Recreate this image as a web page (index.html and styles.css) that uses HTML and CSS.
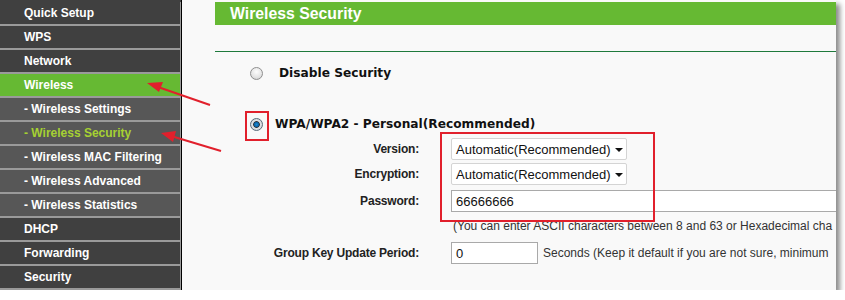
FILE: index.html
```html
<!DOCTYPE html>
<html lang="en">
<head>
    <meta charset="UTF-8">
    <title>Wireless Security</title>
    <link rel="stylesheet" href="styles.css">
</head>
<body>
    <div class="shot">
        <ul class="menu">
            <li class="item">Quick Setup</li>
            <li class="item">WPS</li>
            <li class="item">Network</li>
            <li class="item active">Wireless</li>
            <li class="item sub">- Wireless Settings</li>
            <li class="item sub current">- Wireless Security</li>
            <li class="item sub">- Wireless MAC Filtering</li>
            <li class="item sub">- Wireless Advanced</li>
            <li class="item sub">- Wireless Statistics</li>
            <li class="item">DHCP</li>
            <li class="item">Forwarding</li>
            <li class="item">Security</li>
        </ul>

        <div class="content">
            <div class="title">Wireless Security</div>
            <div class="rule"></div>

            <div class="option opt-disable">
                <span class="radio"></span>
                <span class="option-label">Disable Security</span>
            </div>
            <div class="option opt-wpa">
                <span class="radio checked"></span>
                <span class="option-label">WPA/WPA2 - Personal(Recommended)</span>
            </div>

            <div class="form">
                <div class="row row-version">
                    <label>Version:</label>
                    <div class="select">Automatic(Recommended)<span class="caret"></span></div>
                </div>
                <div class="row row-enc">
                    <label>Encryption:</label>
                    <div class="select">Automatic(Recommended)<span class="caret"></span></div>
                </div>
                <div class="row row-pass">
                    <label>Password:</label>
                    <div class="input wide">66666666</div>
                </div>
                <div class="row row-hint">
                    <label></label>
                    <div class="hint">(You can enter ASCII characters between 8 and 63 or Hexadecimal cha</div>
                </div>
                <div class="row row-group">
                    <label>Group Key Update Period:</label>
                    <div class="input short">0</div>
                    <span class="note">Seconds (Keep it default if you are not sure, minimum</span>
                </div>
            </div>
        </div>

        <!-- annotations drawn over the screenshot -->
        <div class="mark mark-radio"></div>
        <div class="mark mark-fields"></div>
        <svg class="arrows" width="836" height="290" viewBox="0 0 836 290">
            <line x1="210" y1="105" x2="158" y2="87" />
            <polygon points="147,83 163,82 159,92" />
            <line x1="221" y1="151" x2="171" y2="136" />
            <polygon points="161,133 176,131 173,142" />
        </svg>
    </div>
</body>
</html>
```

FILE: styles.css
```css
* {
    margin: 0;
    padding: 0;
    box-sizing: border-box;
}

body {
    background: #fff;
    font-family: "Liberation Sans", Arial, sans-serif;
    font-size: 12px;
    color: #222;
}

.shot {
    position: relative;
    width: 836px;
    height: 290px;
    display: flex;
    overflow: hidden;
    background: #f9f9f9;
    box-shadow: 4px 4px 5px rgba(0, 0, 0, 0.45);
}

/* left menu */
.menu {
    list-style: none;
    width: 182px;
    flex-shrink: 0;
    padding-top: 2px;
    background: #404040;
    border-right: 1px solid #000;
}

.item {
    height: 24px;
    padding-left: 24px;
    display: flex;
    align-items: center;
    background: #404040;
    border-bottom: 2px solid #9a9a9a;
    border-right: 1px solid #9a9a9a;
    color: #fff;
    font-weight: bold;
    font-size: 12px;
}

.item.sub {
    background: #575757;
}

.item.active {
    background: #66b933;
}

.item.current {
    color: #a6d132;
}

/* main area */
.content {
    flex: 1;
    padding-left: 33px;
    padding-top: 2px;
    position: relative;
}

.title {
    height: 23px;
    background: #66b933;
    color: #fff;
    font-weight: bold;
    font-size: 15.8px;
    line-height: 23px;
    padding-left: 15px;
}

.rule {
    height: 1px;
    margin-top: 26px;
    background: #1f7a3c;
}

.option {
    display: flex;
    align-items: center;
    height: 20px;
    padding-left: 35px;
}

.opt-disable {
    margin-top: 11px;
}

.opt-wpa {
    margin-top: 31px;
}

.option-label {
    font-family: "DejaVu Sans", Verdana, sans-serif;
    font-weight: bold;
    font-size: 12.2px;
    color: #111;
    margin-left: 16px;
}

.opt-wpa .option-label {
    margin-left: 12px;
}

.radio {
    width: 13px;
    height: 13px;
    border-radius: 50%;
    border: 1px solid #8f8f8f;
    background: radial-gradient(circle at 50% 35%, #fdfdfd 0%, #e4e4e4 60%, #c8c8c8 100%);
}

.radio.checked {
    border-color: #5a6b7a;
    background: radial-gradient(circle, #1d8fd8 0%, #0b5e9c 30%, #2a2f36 38%, #dfe3e6 48%, #c4c8cc 100%);
}

.form {
    margin-top: 4px;
}

.row {
    display: flex;
    align-items: center;
    height: 22px;
}

.row label {
    width: 204px;
    flex-shrink: 0;
    margin-right: 32px;
    text-align: right;
    font-weight: bold;
    font-size: 12px;
    letter-spacing: -0.2px;
    color: #222;
}

.row-version {
    margin-bottom: 3px;
}

.row-enc {
    margin-bottom: 5px;
}

.row-hint {
    height: 16px;
    margin-top: 6px;
}

.row-group {
    margin-top: 8px;
}

.select {
    width: 176px;
    height: 22px;
    padding-left: 4px;
    display: flex;
    align-items: center;
    background: #fff;
    border: 1px solid #d4d4d4;
    border-radius: 2px;
    font-size: 13px;
    color: #111;
    position: relative;
}

.caret {
    position: absolute;
    right: 3px;
    top: 9px;
    border-left: 4px solid transparent;
    border-right: 4px solid transparent;
    border-top: 4px solid #111;
}

.input {
    height: 22px;
    padding-left: 4px;
    display: flex;
    align-items: center;
    background: #fff;
    border: 1px solid #a9a9a9;
    font-size: 13px;
    color: #111;
    flex-shrink: 0;
}

.input.wide {
    width: 420px;
}

.input.short {
    width: 87px;
}

.hint,
.note {
    white-space: nowrap;
    font-size: 12px;
    color: #333;
}

.hint {
    padding-left: 2px;
}

.note {
    margin-left: 5px;
}

/* red annotations */
.mark {
    position: absolute;
    border: 2px solid #e1202c;
}

.mark-radio {
    left: 245px;
    top: 111px;
    width: 24px;
    height: 30px;
}

.mark-fields {
    left: 440px;
    top: 132px;
    width: 215px;
    height: 90px;
}

.arrows {
    position: absolute;
    left: 0;
    top: 0;
}

.arrows line {
    stroke: #e1202c;
    stroke-width: 2;
}

.arrows polygon {
    fill: #e1202c;
}
```
